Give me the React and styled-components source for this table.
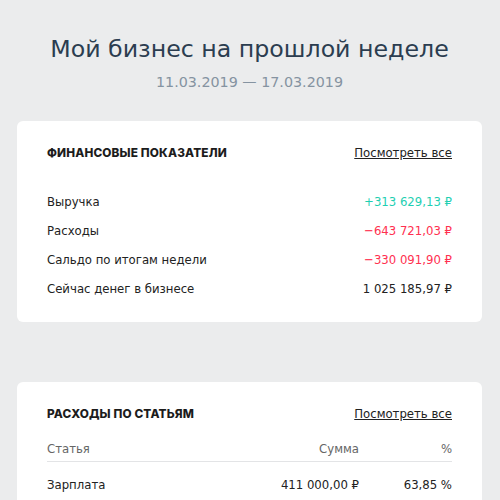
import React from "react";
import styled, { createGlobalStyle } from "styled-components";

const GlobalStyle = createGlobalStyle`
  body {
    margin: 0;
    background: #ebeced;
    font-family: "DejaVu Sans Condensed", "DejaVu Sans", Verdana, sans-serif;
    color: #222;
  }
`;

const metrics = [
  { label: "Выручка", value: "+313 629,13 ₽", tone: "plus" },
  { label: "Расходы", value: "−643 721,03 ₽", tone: "minus" },
  { label: "Сальдо по итогам недели", value: "−330 091,90 ₽", tone: "minus" },
  { label: "Сейчас денег в бизнесе", value: "1 025 185,97 ₽" },
];

const expenses = [{ name: "Зарплата", sum: "411 000,00 ₽", pct: "63,85 %" }];

const toneColor = { plus: "#1fcfb2", minus: "#ff3050" };

export default function App() {
  return (
    <Page>
      <GlobalStyle />
      <Title>Мой бизнес на прошлой неделе</Title>
      <Period>11.03.2019 — 17.03.2019</Period>

      <Card>
        <CardHead>
          <CardTitle>Финансовые показатели</CardTitle>
          <MoreLink href="#">Посмотреть все</MoreLink>
        </CardHead>
        <Metrics>
          {metrics.map((m) => (
            <MetricRow key={m.label}>
              <span>{m.label}</span>
              <Amount $tone={m.tone}>{m.value}</Amount>
            </MetricRow>
          ))}
        </Metrics>
      </Card>

      <Card $gap>
        <CardHead>
          <CardTitle>Расходы по статьям</CardTitle>
          <MoreLink href="#">Посмотреть все</MoreLink>
        </CardHead>
        <Table>
          <TableHead>
            <span>Статья</span>
            <Right>Сумма</Right>
            <Right>%</Right>
          </TableHead>
          {expenses.map((e) => (
            <TableRow key={e.name}>
              <span>{e.name}</span>
              <Right>{e.sum}</Right>
              <Right>{e.pct}</Right>
            </TableRow>
          ))}
        </Table>
      </Card>
    </Page>
  );
}

const Page = styled.div`
  padding: 34px 18px 0 17px;
  display: flex;
  flex-direction: column;
  align-items: center;
`;

const Title = styled.h1`
  margin: 0;
  font-family: "DejaVu Sans", Verdana, sans-serif;
  font-size: 23.7px;
  font-weight: 400;
  line-height: 30px;
  color: #2b3d50;
`;

const Period = styled.div`
  margin-top: 8px;
  font-family: "DejaVu Sans", Verdana, sans-serif;
  font-size: 14.3px;
  line-height: 20px;
  color: #8593a1;
`;

const Card = styled.section`
  align-self: stretch;
  margin-top: ${(p) => (p.$gap ? "60px" : "29px")};
  padding: 24px 30px 19px;
  background: #fff;
  border-radius: 6px;
`;

const CardHead = styled.div`
  display: flex;
  justify-content: space-between;
  align-items: baseline;
  height: 14px;
`;

const CardTitle = styled.h2`
  margin: 0;
  font-family: Inter, "DejaVu Sans", sans-serif;
  font-size: 11.8px;
  font-weight: 800;
  letter-spacing: 0.15px;
  text-transform: uppercase;
  color: #1c1c1c;
`;

const MoreLink = styled.a`
  font-size: 13px;
  color: #222;
  text-decoration: underline;
`;

const Metrics = styled.div`
  margin-top: 28px;
  display: flex;
  flex-direction: column;
`;

const MetricRow = styled.div`
  display: flex;
  justify-content: space-between;
  font-size: 13px;
  line-height: 29px;
  color: #222;
`;

const Amount = styled.span`
  color: ${(p) => toneColor[p.$tone] || "#222"};
`;

const Table = styled.div`
  margin-top: 21px;
  font-size: 13px;
`;

const TableHead = styled.div`
  display: grid;
  grid-template-columns: 1fr 150px 93px;
  padding-bottom: 4px;
  line-height: 16px;
  color: #666;
  border-bottom: 1px solid #e3e4e6;
`;

const TableRow = styled.div`
  display: grid;
  grid-template-columns: 1fr 150px 93px;
  line-height: 46px;
  color: #222;
`;

const Right = styled.span`
  text-align: right;
`;
